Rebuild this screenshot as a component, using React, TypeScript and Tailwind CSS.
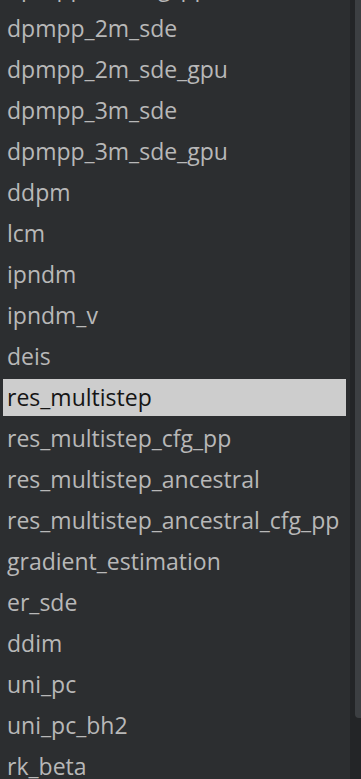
import React from "react";

const items = [
  "dpmpp_2m_cfg_pp",
  "dpmpp_2m_sde",
  "dpmpp_2m_sde_gpu",
  "dpmpp_3m_sde",
  "dpmpp_3m_sde_gpu",
  "ddpm",
  "lcm",
  "ipndm",
  "ipndm_v",
  "deis",
  "res_multistep",
  "res_multistep_cfg_pp",
  "res_multistep_ancestral",
  "res_multistep_ancestral_cfg_pp",
  "gradient_estimation",
  "er_sde",
  "ddim",
  "uni_pc",
  "uni_pc_bh2",
  "rk_beta",
];

export default function App() {
  return (
    <div className="flex h-[779px] w-[361px] overflow-hidden bg-[#2c2e30]">
      <div className="flex-1 overflow-hidden">
        <div className="mt-[-33px] flex flex-col">
          {items.map((it) => {
            const sel = it === "res_multistep";
            return (
              <div key={it} className="h-[41px] py-[2px] pl-[3px] pr-[4px]">
                <div
                  className={
                    "flex h-[37px] items-center whitespace-nowrap pl-[4px] text-[23px] leading-none " +
                    (sel ? "bg-[#cdcdcd] text-[#151515]" : "text-[#b8b8b8]")
                  }
                  style={{ fontFamily: '"Open Sans", "Noto Sans", sans-serif' }}
                >
                  {it}
                </div>
              </div>
            );
          })}
        </div>
      </div>
      <div className="flex w-[11px] flex-col bg-[#232527]">
        <div className="ml-[5px] h-[718px] rounded-bl-[4px] bg-[#3c3f42]" />
      </div>
    </div>
  );
}
